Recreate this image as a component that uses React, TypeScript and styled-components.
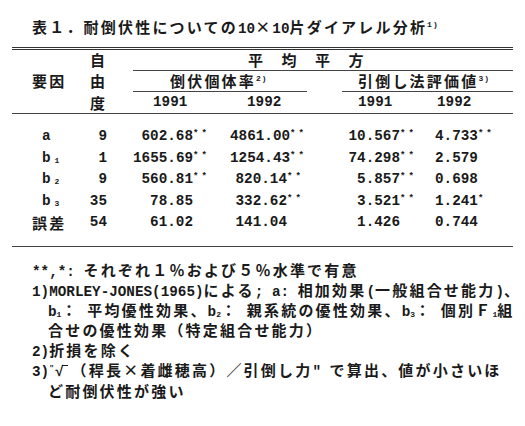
import React from 'react';
import styled, { createGlobalStyle } from 'styled-components';

const GlobalStyle = createGlobalStyle`
  html, body {
    margin: 0;
    padding: 0;
    background: #ffffff;
  }
  body {
    width: 525px;
    height: 426px;
    overflow: hidden;
    color: #1a1a1a;
    font-family: "Liberation Mono", "Noto Sans CJK JP", monospace;
    font-weight: 700;
  }
`;

const SPage = styled.div`
  padding: 16px 12px 0 12px;
`;

const SHalf = styled.span`
  font-family: "Liberation Mono", monospace;
  font-size: 14.3px;
  letter-spacing: 0;
`;

const SFull = styled.span`
  font-family: "Noto Sans CJK JP", sans-serif;
  font-size: 15px;
  letter-spacing: 2.2px;
`;

const SSpread = styled(SFull)`
  letter-spacing: 18.5px;
`;

const SSup = styled.span`
  font-family: "Liberation Mono", monospace;
  font-size: 8px;
  letter-spacing: 1px;
  vertical-align: 6px;
  line-height: 1;
`;

const SSub = styled.span<{ $gap?: number }>`
  font-family: "Liberation Mono", monospace;
  font-size: 8px;
  margin-left: ${(p) => p.$gap ?? 0}px;
  vertical-align: -1px;
  line-height: 1;
`;

const SStars = styled.span`
  display: inline-block;
  width: 16px;
  text-align: left;
  font-family: "Liberation Mono", monospace;
  font-size: 9px;
  letter-spacing: 3px;
  vertical-align: 4px;
  line-height: 1;
`;

// bar over the radical sign
const SVinculum = styled.span`
  display: inline-block;
  width: 6px;
  height: 9px;
  margin-left: -2px;
  margin-right: 4px;
  border-top: 1.5px solid #1a1a1a;
  vertical-align: 1px;
`;

// fixed-height line: mixed fonts may not grow the line box
const SLine = styled.div<{ $h: number; $pl?: number; $pr?: number; $align?: 'left' | 'right' }>`
  height: ${(p) => p.$h}px;
  line-height: ${(p) => p.$h}px;
  padding: 0 ${(p) => p.$pr ?? 0}px 0 ${(p) => p.$pl ?? 0}px;
  text-align: ${(p) => p.$align ?? 'left'};
  white-space: pre;
  overflow: visible;
`;

const STitle = styled(SLine)`
  margin-bottom: 10px;
`;

const STable = styled.table`
  width: 501px;
  table-layout: fixed;
  border-collapse: separate;
  border-spacing: 0;
  border-top: 3px double #333;
`;

const SCol = styled.col<{ $w: number }>`
  width: ${(p) => p.$w}px;
`;

const SHead = styled.th<{ $line?: boolean }>`
  padding: 0;
  text-align: left;
  vertical-align: top;
  font-weight: 700;
  border-bottom: ${(p) => (p.$line ? '1px solid #444' : '0')};
`;

const SCell = styled.td<{ $first?: boolean; $last?: boolean }>`
  padding: ${(p) => (p.$first ? 12 : 0)}px 0 ${(p) => (p.$last ? 12 : 0)}px 0;
  vertical-align: top;
  border-bottom: ${(p) => (p.$last ? '1px solid #444' : '0')};
`;

const SNotes = styled.div`
  margin-top: 13px;
`;

// half-width ASCII runs in mono, everything else on the full-width grid
const Mixed = ({ text }: { text: string }) => (
  <>
    {(text.match(/[\x20-\x7e]+|[^\x20-\x7e]+/g) ?? []).map((run, i) =>
      /[\x20-\x7e]/.test(run[0]) ? (
        <SHalf key={i}>{run}</SHalf>
      ) : (
        <SFull key={i}>{run}</SFull>
      )
    )}
  </>
);

type Value = { n: string; s?: string };

type Row = {
  label: React.ReactNode;
  wide?: boolean;
  df: string;
  vals: Value[];
};

const BLabel = ({ i }: { i: string }) => (
  <>
    <SHalf>b</SHalf>
    <SSub $gap={4}>{i}</SSub>
  </>
);

const rows: Row[] = [
  {
    label: <SHalf>a</SHalf>,
    df: '9',
    vals: [
      { n: '602.68', s: '**' },
      { n: '4861.00', s: '**' },
      { n: '10.567', s: '**' },
      { n: '4.733', s: '**' },
    ],
  },
  {
    label: <BLabel i="1" />,
    df: '1',
    vals: [
      { n: '1655.69', s: '**' },
      { n: '1254.43', s: '**' },
      { n: '74.298', s: '**' },
      { n: '2.579' },
    ],
  },
  {
    label: <BLabel i="2" />,
    df: '9',
    vals: [
      { n: '560.81', s: '**' },
      { n: '820.14', s: '**' },
      { n: '5.857', s: '**' },
      { n: '0.698' },
    ],
  },
  {
    label: <BLabel i="3" />,
    df: '35',
    vals: [
      { n: '78.85' },
      { n: '332.62', s: '**' },
      { n: '3.521', s: '**' },
      { n: '1.241', s: '*' },
    ],
  },
  {
    label: <SFull>誤差</SFull>,
    wide: true,
    df: '54',
    vals: [{ n: '61.02' }, { n: '141.04' }, { n: '1.426' }, { n: '0.744' }],
  },
];

const Num = ({ v }: { v: Value }) => (
  <>
    <SHalf>{v.n}</SHalf>
    <SStars>{v.s ?? ''}</SStars>
  </>
);

const ROW_H = 21.5;

const App = () => (
  <>
    <GlobalStyle />
    <SPage>
      <STitle $h={21} $pl={20}>
        <Mixed text="表１．耐倒伏性についての10×10片ダイアレル分析" />
        <SSup>1)</SSup>
      </STitle>

      <STable>
        <colgroup>
          <SCol $w={63} />
          <SCol $w={58} />
          <SCol $w={97} />
          <SCol $w={77} />
          <SCol $w={35} />
          <SCol $w={88} />
          <SCol $w={83} />
        </colgroup>
        <thead>
          <tr>
            <SHead>
              <SLine $h={20} />
            </SHead>
            <SHead>
              <SLine $h={20} $pl={15}>
                <SFull>自</SFull>
              </SLine>
            </SHead>
            <SHead colSpan={5} $line>
              <SLine $h={20} $pl={115}>
                <SSpread>平均平方</SSpread>
              </SLine>
            </SHead>
          </tr>
          <tr>
            <SHead>
              <SLine $h={20} $pl={20}>
                <SFull>要因</SFull>
              </SLine>
            </SHead>
            <SHead>
              <SLine $h={20} $pl={15}>
                <SFull>由</SFull>
              </SLine>
            </SHead>
            <SHead colSpan={2} $line>
              <SLine $h={20} $pl={37}>
                <SFull>倒伏個体率</SFull>
                <SSup>2)</SSup>
              </SLine>
            </SHead>
            <SHead>
              <SLine $h={20} />
            </SHead>
            <SHead colSpan={2} $line>
              <SLine $h={20} $pl={16}>
                <SFull>引倒し法評価値</SFull>
                <SSup>3)</SSup>
              </SLine>
            </SHead>
          </tr>
          <tr>
            <SHead $line>
              <SLine $h={21} />
            </SHead>
            <SHead $line>
              <SLine $h={21} $pl={15}>
                <SFull>度</SFull>
              </SLine>
            </SHead>
            <SHead $line>
              <SLine $h={21} $pl={20}>
                <SHalf>1991</SHalf>
              </SLine>
            </SHead>
            <SHead $line>
              <SLine $h={21} $pl={17}>
                <SHalf>1992</SHalf>
              </SLine>
            </SHead>
            <SHead $line>
              <SLine $h={21} />
            </SHead>
            <SHead $line>
              <SLine $h={21} $pl={16}>
                <SHalf>1991</SHalf>
              </SLine>
            </SHead>
            <SHead $line>
              <SLine $h={21} $pl={7}>
                <SHalf>1992</SHalf>
              </SLine>
            </SHead>
          </tr>
        </thead>
        <tbody>
          {rows.map((r, i) => {
            const first = i === 0;
            const last = i === rows.length - 1;
            return (
              <tr key={i}>
                <SCell $first={first} $last={last}>
                  <SLine $h={ROW_H} $pl={r.wide ? 20 : 30}>
                    {r.label}
                  </SLine>
                </SCell>
                <SCell $first={first} $last={last}>
                  <SLine $h={ROW_H} $align="right" $pr={26}>
                    <SHalf>{r.df}</SHalf>
                  </SLine>
                </SCell>
                <SCell $first={first} $last={last}>
                  <SLine $h={ROW_H} $align="right" $pr={21}>
                    <Num v={r.vals[0]} />
                  </SLine>
                </SCell>
                <SCell $first={first} $last={last}>
                  <SLine $h={ROW_H} $align="right" $pr={4}>
                    <Num v={r.vals[1]} />
                  </SLine>
                </SCell>
                <SCell $first={first} $last={last}>
                  <SLine $h={ROW_H} />
                </SCell>
                <SCell $first={first} $last={last}>
                  <SLine $h={ROW_H} $align="right" $pr={14}>
                    <Num v={r.vals[2]} />
                  </SLine>
                </SCell>
                <SCell $first={first} $last={last}>
                  <SLine $h={ROW_H} $pl={5}>
                    <Num v={r.vals[3]} />
                  </SLine>
                </SCell>
              </tr>
            );
          })}
        </tbody>
      </STable>

      <SNotes>
        <SLine $h={20.2} $pl={20}>
          <Mixed text="**,*: それぞれ１％および５％水準で有意" />
        </SLine>
        <SLine $h={20.2} $pl={20}>
          <Mixed text="1)MORLEY-JONES(1965)による; a: 相加効果(一般組合せ能力)、" />
        </SLine>
        <SLine $h={20.2} $pl={36}>
          <SHalf>b</SHalf>
          <SSub>1</SSub>
          <Mixed text="： 平均優性効果、b" />
          <SSub>2</SSub>
          <Mixed text="： 親系統の優性効果、b" />
          <SSub>3</SSub>
          <Mixed text="： 個別Ｆ" />
          <SSub>1</SSub>
          <SFull>組</SFull>
        </SLine>
        <SLine $h={20.2} $pl={36}>
          <Mixed text="合せの優性効果（特定組合せ能力）" />
        </SLine>
        <SLine $h={20.2} $pl={20}>
          <Mixed text="2)折損を除く" />
        </SLine>
        <SLine $h={20.2} $pl={20}>
          <SHalf>3)</SHalf>
          <SSup>"</SSup>
          <SHalf>√</SHalf>
          <SVinculum />
          <Mixed text={'（稈長×着雌穂高）／引倒し力" で算出、値が小さいほ'} />
        </SLine>
        <SLine $h={20.2} $pl={36}>
          <Mixed text="ど耐倒伏性が強い" />
        </SLine>
      </SNotes>
    </SPage>
  </>
);

export default App;
